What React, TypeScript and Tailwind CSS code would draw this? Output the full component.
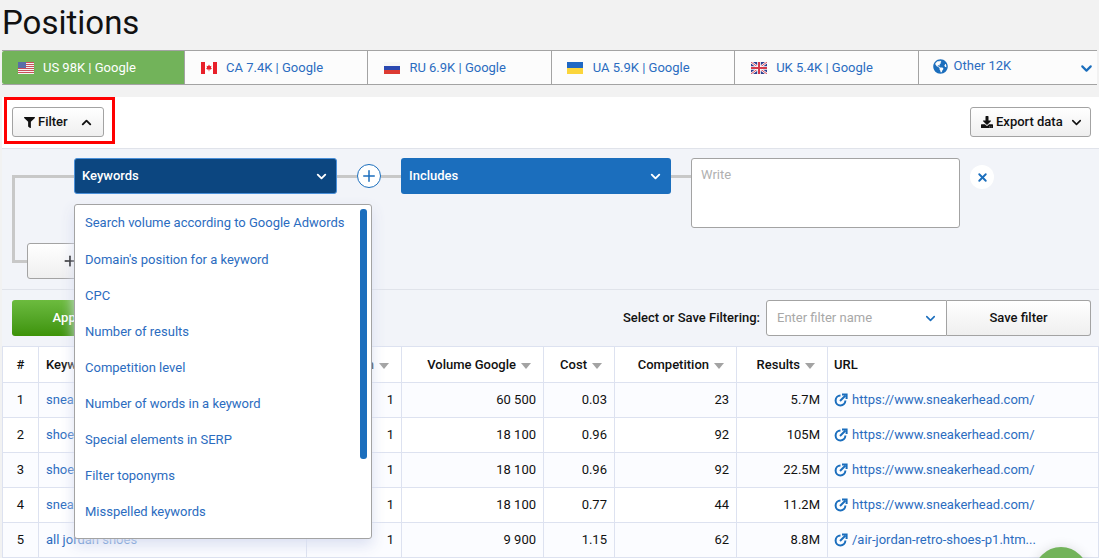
import { ChevronDown, ChevronUp, Plus, X } from 'lucide-react';
import { FaDownload, FaFilter, FaGlobeAmericas } from 'react-icons/fa';

const rows = [
  { n: 1, kw: 'sneakerhead', pos: 1, vol: '60 500', cost: '0.03', comp: 23, res: '5.7M', url: 'https://www.sneakerhead.com/' },
  { n: 2, kw: 'shoe stores', pos: 1, vol: '18 100', cost: '0.96', comp: 92, res: '105M', url: 'https://www.sneakerhead.com/' },
  { n: 3, kw: 'shoe store', pos: 1, vol: '18 100', cost: '0.96', comp: 92, res: '22.5M', url: 'https://www.sneakerhead.com/' },
  { n: 4, kw: 'sneaker stores', pos: 1, vol: '18 100', cost: '0.77', comp: 44, res: '11.2M', url: 'https://www.sneakerhead.com/' },
  { n: 5, kw: 'all jordan shoes', pos: 1, vol: '9 900', cost: '1.15', comp: 62, res: '8.8M', url: '/air-jordan-retro-shoes-p1.htm...' },
];

const options = [
  'Search volume according to Google Adwords',
  "Domain's position for a keyword",
  'CPC',
  'Number of results',
  'Competition level',
  'Number of words in a keyword',
  'Special elements in SERP',
  'Filter toponyms',
  'Misspelled keywords',
];

function UsFlag() {
  return (
    <svg width="16" height="12" viewBox="0 0 16 12">
      <rect width="16" height="12" fill="#f4f4f4" />
      {[0, 2, 4, 6, 8, 10].map((y) => <rect key={y} y={y} width="16" height="1" fill="#c9505a" />)}
      <rect width="8" height="6" fill="#5a6ea8" />
    </svg>
  );
}

function CaFlag() {
  return (
    <svg width="16" height="12" viewBox="0 0 16 12">
      <rect width="16" height="12" fill="#fff" />
      <rect width="4" height="12" fill="#e8202a" />
      <rect x="12" width="4" height="12" fill="#e8202a" />
      <path d="M8 2.5 9 4.2 10.4 3.8 10 6 11 6.2 9.8 7.6 8.3 7.4V9.2H7.7V7.4L6.2 7.6 5 6.2 6 6 5.6 3.8 7 4.2Z" fill="#e8202a" />
    </svg>
  );
}

function RuFlag() {
  return (
    <svg width="16" height="12" viewBox="0 0 16 12">
      <rect width="16" height="4" fill="#f6f6f6" />
      <rect y="4" width="16" height="4" fill="#2a48b0" />
      <rect y="8" width="16" height="4" fill="#dc3a32" />
    </svg>
  );
}

function UaFlag() {
  return (
    <svg width="16" height="12" viewBox="0 0 16 12">
      <rect width="16" height="6" fill="#1f68c4" />
      <rect y="6" width="16" height="6" fill="#fbd53b" />
    </svg>
  );
}

function UkFlag() {
  return (
    <svg width="16" height="12" viewBox="0 0 16 12">
      <rect width="16" height="12" rx="1.5" fill="#2f3f8f" />
      <path d="M0 0 16 12M16 0 0 12" stroke="#fff" strokeWidth="2.4" />
      <path d="M0 0 16 12M16 0 0 12" stroke="#d5394a" strokeWidth="0.9" />
      <path d="M8 0V12M0 6H16" stroke="#fff" strokeWidth="3.6" />
      <path d="M8 0V12M0 6H16" stroke="#d5394a" strokeWidth="2" />
    </svg>
  );
}

function LinkIcon() {
  return (
    <svg width="14" height="14" viewBox="0 0 14 14" fill="none" stroke="#1b6ebd" strokeWidth="2" className="flex-none">
      <path d="M6.5 2.6A4.9 4.9 0 1 0 11.4 7.6" />
      <path d="M6 8 11.5 2.5" />
      <path d="M8 1.4H12.6V6" />
    </svg>
  );
}

function Sort() {
  return <span className="inline-block ml-[5px] border-x-[5px] border-t-[6px] border-x-transparent border-t-[#a3a3a3]" />;
}

const tabs = [
  { flag: <CaFlag />, label: 'CA 7.4K | Google' },
  { flag: <RuFlag />, label: 'RU 6.9K | Google' },
  { flag: <UaFlag />, label: 'UA 5.9K | Google' },
  { flag: <UkFlag />, label: 'UK 5.4K | Google' },
];

export default function App() {
  return (
    <div className="relative h-screen overflow-hidden bg-[#f2f2f2] font-['Roboto',sans-serif] text-[13px] text-[#111]">
      <h1 className="h-[50px] pl-[2px] text-[33px] leading-[46px] text-[#111]">Positions</h1>

      {/* Tabs */}
      <div className="mx-[2px] flex h-[35px] border border-l-0 border-r-0 border-[#a3a3a3] bg-[#fcfcfc] text-[#2b6cc0]">
        <div className="flex w-[182px] items-center gap-[9px] rounded-l-[2px] bg-[#72b35a] pl-[16px] text-white">
          <UsFlag />
          <span>US 98K | Google</span>
        </div>
        {tabs.map((t) => (
          <div key={t.label} className="flex w-[183.4px] items-center gap-[9.5px] border-l border-[#a3a3a3] pl-[15.5px]">
            {t.flag}
            <span>{t.label}</span>
          </div>
        ))}
        <div className="flex flex-1 items-center border-l border-[#a3a3a3] pl-[14px]">
          <FaGlobeAmericas className="mb-[3px] h-[15px] w-[15px] text-[#1b6ebd]" />
          <span className="mb-[3px] ml-[6px]">Other 12K</span>
          <ChevronDown className="ml-auto mr-[2px] mt-[2px] h-[17px] w-[17px] text-[#1b6ebd]" strokeWidth={3} />
        </div>
      </div>

      {/* Toolbar */}
      <div className="relative ml-[2px] mt-[12px] flex h-[52px] items-start justify-between border-b border-[#e0e3ea] bg-white pl-[10px] pr-[8px] pt-[10px]">
        <button className="flex h-[30px] w-[92px] items-center rounded-[3px] border border-[#a3a3a3] bg-gradient-to-b from-white to-[#efefef] pl-[11px] font-medium">
          <FaFilter className="mr-[3px] h-[11px] w-[11px]" />
          Filter
          <ChevronUp className="ml-[11px] h-[15px] w-[15px]" strokeWidth={3} />
        </button>
        <button className="flex h-[30px] w-[121px] items-center rounded-[3px] border border-[#a3a3a3] bg-gradient-to-b from-white to-[#efefef] pl-[10px] font-medium">
          <FaDownload className="mr-[3px] h-[12px] w-[12px]" />
          Export data
          <ChevronDown className="ml-[6px] h-[15px] w-[15px]" strokeWidth={2.5} />
        </button>
        <div className="pointer-events-none absolute left-[2px] top-0 h-[47px] w-[111px] border-[3px] border-[#ff0000]" />
      </div>

      {/* Filter rule */}
      <div className="ml-[2px] flex h-[141px] border-b border-[#e0e3ea] bg-[#f2f4f9] pl-[10px]">
        <div className="mt-[26px] h-[88px] w-[15px] flex-none border-y-[3px] border-l-[3px] border-[#c8c8c8]" />
        <div className="pt-[9px]">
          <div className="flex items-start">
            <div className="mt-[17px] h-[3px] w-[47px] bg-[#c8c8c8]" />
            <div className="relative">
              <div className="flex h-[36px] w-[263px] items-center justify-between rounded-[3px] border border-[#4a90d9] bg-[#0c4680] pl-[7px] pr-[7px] font-medium text-white">
                Keywords
                <ChevronDown className="h-[15px] w-[15px]" strokeWidth={3} />
              </div>
              <div className="absolute left-0 top-[46px] z-10 flex h-[335px] w-[298px] justify-between rounded-[3px] border border-[#a3a3a3] bg-white pr-[4px] text-[#2b6cc0] shadow-[0_6px_14px_rgba(216,221,240,0.95)]">
                <ul className="pt-[0.2px]">
                  {options.map((o) => (
                    <li key={o} className="flex h-[36.1px] items-center whitespace-nowrap pl-[10px]">{o}</li>
                  ))}
                </ul>
                <div className="mt-[4px] h-[250px] w-[7px] rounded-[3px] bg-[#1b6ebd]" />
              </div>
            </div>
            <div className="mt-[17px] h-[3px] w-[20px] bg-[#c8c8c8]" />
            <div className="mt-[6px] flex h-[24px] w-[24px] items-center justify-center rounded-full border border-[#1b6ebd] bg-white text-[#1b6ebd]">
              <Plus className="h-[18px] w-[18px]" strokeWidth={2} />
            </div>
            <div className="mt-[17px] h-[3px] w-[20px] bg-[#c8c8c8]" />
            <div className="flex h-[36px] w-[270px] items-center justify-between rounded-[3px] bg-[#1b6ebd] pl-[8px] pr-[8px] font-medium text-white">
              Includes
              <ChevronDown className="h-[15px] w-[15px]" strokeWidth={3} />
            </div>
            <div className="mt-[17px] h-[3px] w-[20px] bg-[#c8c8c8]" />
            <div className="h-[70px] w-[269px] rounded-[3px] border border-[#a3a3a3] bg-white pl-[9px] pt-[6px] text-[#b0b0b0]">Write</div>
            <div className="ml-[10px] mt-[7px] flex h-[24px] w-[24px] items-center justify-center rounded-full bg-white text-[#1b6ebd]">
              <X className="h-[13px] w-[13px]" strokeWidth={3.5} />
            </div>
          </div>
          <button className="mt-[15px] flex h-[36px] w-[86px] items-center justify-center rounded-[3px] border border-[#a3a3a3] bg-gradient-to-b from-white to-[#efefef]">
            <Plus className="h-[16px] w-[16px]" strokeWidth={2.5} />
          </button>
        </div>
      </div>

      {/* Apply / save */}
      <div className="ml-[2px] flex h-[56px] items-start justify-between bg-[#f2f4f9] pl-[10px] pr-[8px] pt-[10px]">
        <button className="h-[36px] w-[114px] rounded-[3px] bg-gradient-to-b from-[#6cbb3e] to-[#3d9306] font-medium text-white">Apply</button>
        <div className="flex items-center">
          <span className="mr-[6px] font-medium">Select or Save Filtering:</span>
          <div className="flex h-[36px] w-[181px] items-center justify-between rounded-l-[3px] border border-[#a3a3a3] bg-white pl-[10px] pr-[8px] text-[#a8a8a8]">
            Enter filter name
            <ChevronDown className="h-[15px] w-[15px] text-[#1b6ebd]" strokeWidth={2.5} />
          </div>
          <button className="h-[36px] w-[144px] rounded-r-[3px] border border-l-0 border-[#a3a3a3] bg-gradient-to-b from-white to-[#efefef] font-medium">Save filter</button>
        </div>
      </div>

      {/* Table */}
      <table className="ml-[2px] w-[1097px] table-fixed border-collapse bg-white">
        <colgroup>
          <col className="w-[36px]" />
          <col className="w-[268px]" />
          <col className="w-[95px]" />
          <col className="w-[142px]" />
          <col className="w-[71px]" />
          <col className="w-[122px]" />
          <col className="w-[91px]" />
          <col />
        </colgroup>
        <thead>
          <tr className="h-[36px] font-medium [&>th]:border [&>th]:border-[#dde2f0] [&>th]:font-medium">
            <th className="text-center">#</th>
            <th className="pl-[7px] text-left">Keyword</th>
            <th className="pr-[12px] text-right">Position<Sort /></th>
            <th className="pr-[12px] text-right">Volume Google<Sort /></th>
            <th className="pr-[12px] text-right">Cost<Sort /></th>
            <th className="pr-[12px] text-right">Competition<Sort /></th>
            <th className="pr-[12px] text-right">Results<Sort /></th>
            <th className="pl-[6px] text-left">URL</th>
          </tr>
        </thead>
        <tbody>
          {rows.map((r) => (
            <tr key={r.n} className="h-[35px] odd:bg-[#fbfcff] [&>td]:border [&>td]:border-[#dde2f0]">
              <td className="text-center">{r.n}</td>
              <td className="pl-[7px] text-[#2b6cc0]">{r.kw}</td>
              <td className="pr-[7px] text-right">{r.pos}</td>
              <td className="pr-[7px] text-right">{r.vol}</td>
              <td className="pr-[7px] text-right">{r.cost}</td>
              <td className="pr-[7px] text-right">{r.comp}</td>
              <td className="pr-[7px] text-right">{r.res}</td>
              <td className="pl-[6px] text-[#2b6cc0]">
                <span className="flex items-center gap-[4px] whitespace-nowrap"><LinkIcon />{r.url}</span>
              </td>
            </tr>
          ))}
        </tbody>
      </table>

      <div className="absolute right-[11px] top-[547px] h-[54px] w-[54px] rounded-full bg-[#72b35a] shadow-[0_0_12px_rgba(0,0,0,0.12)]" />
    </div>
  );
}
